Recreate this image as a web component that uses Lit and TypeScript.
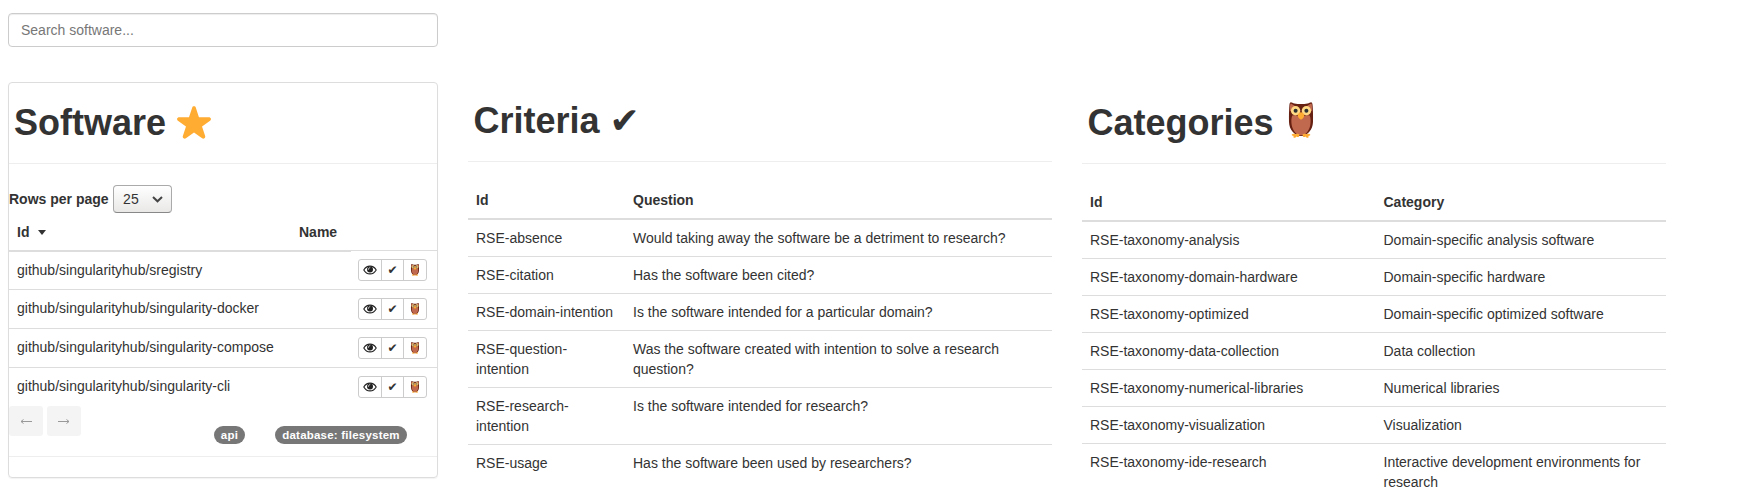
import { LitElement, html, css, svg } from "lit";
import { customElement, property } from "lit/decorators.js";

const owl = html`<svg class="owl" viewBox="0 0 36 36">
  ${svg`
  <path fill="#662113" d="M29.600 3.200C29.400 1 28.900.2 28.100.2c-1 0-2 .9-3.600 1.200-2 .4-4 .5-6.500.5s-4.500-.1-6.500-.5C9.900 1.100 8.900.2 7.900.2c-.8 0-1.300.8-1.500 3C6 8 5.900 13 6 20c.2 7.600 5.600 14 12 14s11.800-6.400 12-14c.1-7 0-12-.4-16.800z"/>
  <path fill="#C1694F" d="M7.600 1.600C6.900 3 6.800 6 6.900 9.500l5.500-4C13 4 9.200 2.300 7.600 1.600zM28.400 1.600c.7 1.400.8 4.400.7 7.900l-5.500-4c-.6-1.500 3.200-3.200 4.800-3.900z"/>
  <path fill="#C1694F" d="M26.700 13.600c-3-.8-5.700.2-8.700 2.400-3-2.200-5.700-3.200-8.700-2.400C8.200 16 8.100 20 8.800 23.500 10 29 13.500 33.300 18 33.300s8-4.300 9.200-9.800c.7-3.500.6-7.500-.5-9.900z"/>
  <circle fill="#FFD983" cx="12.600" cy="8.700" r="4.700"/><circle fill="#FFD983" cx="23.400" cy="8.700" r="4.700"/>
  <circle fill="#292F33" cx="12.600" cy="8.700" r="2"/><circle fill="#292F33" cx="23.400" cy="8.700" r="2"/>
  <path fill="#FFAC33" d="M21.300 13.400c0 1.500-2.100 4-3.300 4s-3.300-2.500-3.300-4S16.500 10.200 18 10.200s3.300 1.700 3.300 3.200z"/>
  <path fill="#FFAC33" d="M16.500 32.500c-1-1-2.500-.6-3.800-.3-1.500-.4-3.400-.6-3.900.2-.4.800.6 1.300 1.800 1.500-.3.900-.2 1.700.6 1.900 1 .2 1.700-.8 2.100-1.400.7.400 1.700.8 2.300.5.700-.4.400-1.400.9-2.400zM19.500 32.500c1-1 2.500-.6 3.800-.3 1.500-.4 3.400-.6 3.900.2.4.8-.6 1.300-1.800 1.500.3.900.2 1.700-.6 1.900-1 .2-1.700-.8-2.100-1.400-.7.400-1.700.8-2.300.5-.7-.4-.4-1.400-.9-2.400z"/>`}
</svg>`;

const star = html`<svg class="star" viewBox="0 0 36 36">
  <path fill="#FFAC33" d="M27.287 34.627c-.404 0-.806-.124-1.152-.371L18 28.422l-8.135 5.834c-.343.247-.746.371-1.148.371-.409 0-.818-.127-1.167-.383-.691-.507-.977-1.401-.709-2.214l3.148-9.600-8.079-5.639c-.7-.491-1.001-1.377-.746-2.192.256-.815 1.007-1.372 1.861-1.381l9.947-.017 3.169-9.500C16.411 2.889 17.150 2.350 18 2.350s1.589.539 1.858 1.347l3.082 9.509 10.035.012c.857.006 1.610.563 1.866 1.379.256.815-.046 1.704-.748 2.195l-8.080 5.638 3.147 9.601c.269.813-.018 1.707-.709 2.214-.346.256-.755.382-1.164.382z"/>
</svg>`;

const eye = html`<svg class="eye" viewBox="0 0 14 10">
  <path fill="none" stroke="#222" stroke-width="1.100" d="M.8 5C2.200 2.500 4.400 1.100 7 1.100s4.800 1.400 6.200 3.900C11.800 7.500 9.600 8.900 7 8.900S2.200 7.500.8 5z"/>
  <circle cx="7" cy="4.500" r="3" fill="#222"/>
  <path d="M5.300 4.400c.1-1 .7-1.600 1.500-1.700" fill="none" stroke="#fff" stroke-width=".8" stroke-linecap="round"/>
</svg>`;

const base = css`
  * { box-sizing: border-box; }
  h1 { margin: 0; font-size: 36px; line-height: 39.600px; font-weight: 700; display: flex; padding: 0 5.500px; white-space: pre; }
  .owl, .star { display: block; width: 36px; height: 36px; flex: none; }
  table { border-collapse: collapse; border-spacing: 0; width: 100%; table-layout: fixed; }
  th { text-align: left; font-weight: 700; padding: 8px; vertical-align: bottom; }
  td { padding: 8px; vertical-align: top; }
`;

@customElement("info-table")
class InfoTable extends LitElement {
  @property({ attribute: false }) heads: string[] = [];
  @property({ attribute: false }) rows: string[][] = [];
  @property({ type: Number }) first = 165;
  static styles = [base, css`
    :host { display: block; border-top: 1px solid #eee; padding-top: 20px; }
    th { border-bottom: 2px solid #ddd; }
    td { border-top: 1px solid #ddd; }
  `];
  render() {
    return html`<table>
      <colgroup><col style="width:${this.first}px" /><col /></colgroup>
      <thead><tr>${this.heads.map((h) => html`<th>${h}</th>`)}</tr></thead>
      <tbody>${this.rows.map((r) => html`<tr>${r.map((c) => html`<td>${c}</td>`)}</tr>`)}</tbody>
    </table>`;
  }
}

@customElement("software-card")
class SoftwareCard extends LitElement {
  static styles = [base, css`
    :host { display: block; width: 430px; height: 396px; border: 1px solid #ddd; border-radius: 4px; box-shadow: 0 1px 1px rgba(0,0,0,.05); }
    h1 { padding: 20px 5px 0; height: 80px; }
    .star { margin-top: 1px; }
    .body { border-top: 1px solid #eee; padding-top: 21px; }
    .pages { display: flex; align-items: center; gap: 4px; height: 28px; font-weight: 700; }
    .select { width: 59px; height: 28px; border: 1px solid #aaa; border-bottom-color: #888; border-radius: 4px; background: linear-gradient(#fff, #e9e8e7); display: flex; align-items: center; justify-content: space-between; padding: 0 8px 0 9.500px; font-weight: 400; }
    .chev { width: 11px; height: 7px; }
    .heads { display: flex; height: 39px; width: 342px; padding: 9px 8px 0; font-weight: 700; border-bottom: 2px solid #ddd; margin-bottom: -2px; }
    .id { width: 282px; display: flex; align-items: center; gap: 9px; height: 20px; }
    .caret { border: 4.500px solid transparent; border-top: 5px solid #333; border-bottom: 0; }
    .row { display: flex; justify-content: space-between; height: 39px; border-top: 1px solid #ddd; padding: 8px 10px 0 8px; }
    .heads + .row .name { padding-top: 1px; }
    .group { display: flex; width: 69px; height: 22px; border: 1px solid #ccc; border-radius: 3px; }
    .group span { flex: 1; display: flex; align-items: center; justify-content: center; }
    .group .check { flex: 0 0 23px; border: solid #ccc; border-width: 0 1px; font: 12px/18px "DejaVu Sans", sans-serif; }
    .group .owl { width: 12px; height: 12px; }
    .eye { width: 14px; height: 10px; }
    .foot { display: flex; height: 50px; }
    .pager { width: 34px; height: 30px; margin-right: 4px; border-radius: 3px; background: #f4f4f4; color: #888; display: flex; align-items: center; justify-content: center; }
    .pager svg { width: 12px; height: 7px; }
    .tags { display: flex; gap: 30px; padding: 20px 0 0 129px; }
    .badge { height: 18px; border-radius: 10px; background: #777; color: #fff; padding: 3px 0; font-size: 11.500px; letter-spacing: .22px; line-height: 12px; font-weight: 700; white-space: nowrap; text-align: center; }
    .b0 { width: 31px; } .b1 { width: 132px; }
    .end { border-top: 1px solid #eee; }
  `];
  render() {
    const names = ["sregistry", "singularity-docker", "singularity-compose", "singularity-cli"];
    return html`<h1>Software ${star}</h1>
      <div class="body">
        <div class="pages">Rows per page <span class="select">25
          <svg class="chev" viewBox="0 0 11 7"><path d="M1 1l4.500 4.300L10 1" fill="none" stroke="#444" stroke-width="2"/></svg></span></div>
        <div class="heads"><span class="id">Id <i class="caret"></i></span><span class="nm">Name</span></div>
        ${names.map((n) => html`<div class="row"><span class="name">github/singularityhub/${n}</span>
          <span class="group"><span>${eye}</span><span class="check">✔</span><span>${owl}</span></span></div>`)}
        <div class="foot">
          <span class="pager"><svg viewBox="0 0 12 7"><path d="M12 3.500H1M3.500 1.500L1 3.500L3.500 5.500" fill="none" stroke="#999"/></svg></span>
          <span class="pager"><svg viewBox="0 0 12 7"><path d="M0 3.500H11M8.500 1.500L11 3.500L8.500 5.500" fill="none" stroke="#999"/></svg></span>
          <div class="tags"><span class="badge b0">api</span><span class="badge b1">database: filesystem</span></div>
        </div>
        <div class="end"></div>
      </div>`;
  }
}

@customElement("app-root")
class AppRoot extends LitElement {
  static styles = [base, css`
    :host { display: block; width: 1755px; height: 499px; overflow: hidden; background: #fff; color: #333; font: 14px/20px "Liberation Sans", Arial, sans-serif; padding: 13px 0 0 8px; box-sizing: border-box; }
    .search { display: block; width: 430px; height: 34px; margin-bottom: 35px; border: 1px solid #ccc; border-radius: 4px; padding: 6px 12px; font: inherit; color: #555; box-shadow: inset 0 1px 1px rgba(0,0,0,.075); }
    .search::placeholder { color: #777; opacity: 1; }
    .cols { display: flex; align-items: flex-start; gap: 30px; }
    .col { width: 584px; }
    .col h1 { padding-top: 19px; height: 79px; }
    .col.cat h1 { padding-top: 21px; height: 81px; }
    .col.cat .owl { margin: -1px 0 0 -1px; }
    .tick { font-family: "DejaVu Sans", sans-serif; }
  `];
  render() {
    return html`<input class="search" placeholder="Search software..." />
      <div class="cols">
        <software-card></software-card>
        <section class="col"><h1>Criteria <span class="tick">✔</span></h1>
          <info-table .first=${157} .heads=${["Id", "Question"]} .rows=${[
            ["RSE-absence", "Would taking away the software be a detriment to research?"],
            ["RSE-citation", "Has the software been cited?"],
            ["RSE-domain-intention", "Is the software intended for a particular domain?"],
            ["RSE-question-intention", "Was the software created with intention to solve a research question?"],
            ["RSE-research-intention", "Is the software intended for research?"],
            ["RSE-usage", "Has the software been used by researchers?"],
          ]}></info-table></section>
        <section class="col cat"><h1>Categories ${owl}</h1>
          <info-table .first=${293.5} .heads=${["Id", "Category"]} .rows=${[
            ["RSE-taxonomy-analysis", "Domain-specific analysis software"],
            ["RSE-taxonomy-domain-hardware", "Domain-specific hardware"],
            ["RSE-taxonomy-optimized", "Domain-specific optimized software"],
            ["RSE-taxonomy-data-collection", "Data collection"],
            ["RSE-taxonomy-numerical-libraries", "Numerical libraries"],
            ["RSE-taxonomy-visualization", "Visualization"],
            ["RSE-taxonomy-ide-research", "Interactive development environments for research"],
          ]}></info-table></section>
      </div>`;
  }
}
